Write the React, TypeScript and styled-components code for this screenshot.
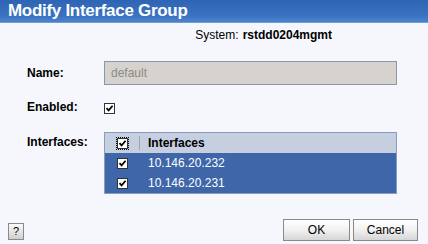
import React, { useState } from "react";
import styled, { createGlobalStyle } from "styled-components";

const GlobalStyle = createGlobalStyle`
    html, body {
        margin: 0;
        padding: 0;
        background: #f5f7fd;
    }
    body {
        font-family: "Liberation Sans", Arial, sans-serif;
        font-size: 12px;
        color: #000000;
    }
`;

const Dialog = styled.div`
    width: 428px;
    height: 244px;
    display: flex;
    flex-direction: column;
    background: #f5f7fd;
    overflow: hidden;
`;

const TitleBar = styled.div`
    height: 22px;
    display: flex;
    align-items: center;
    padding-left: 8px;
    background: linear-gradient(#2f64b4 0%, #3a72c2 70%, #4a82cc 100%);
    border-bottom: 1px solid #6f9ad6;
    color: #ffffff;
    font-weight: bold;
    font-size: 17px;
    letter-spacing: -0.3px;
`;

const SystemLine = styled.div`
    display: flex;
    justify-content: flex-end;
    padding: 5px 96px 0 0;
    height: 17px;
    font-size: 12px;
    b {
        margin-left: 4px;
    }
`;

const Form = styled.div`
    display: grid;
    grid-template-columns: 77px 293px;
    padding: 16px 0 0 27px;
`;

const Label = styled.div<{ height: number; top?: number }>`
    height: ${(p) => p.height}px;
    box-sizing: border-box;
    padding-top: ${(p) => p.top ?? 0}px;
    display: flex;
    align-items: ${(p) => (p.top ? "flex-start" : "center")};
    font-weight: bold;
    font-size: 12px;
`;

const TextInput = styled.div`
    height: 24px;
    box-sizing: border-box;
    border: 1px solid #8c96a6;
    background: #d6d3ce;
    color: #8d8a85;
    font-size: 12px;
    display: flex;
    align-items: center;
    padding-left: 6px;
`;

const Box = styled.span<{ dotted?: boolean }>`
    display: inline-flex;
    width: 11px;
    height: 11px;
    box-sizing: border-box;
    border: 1px solid #333333;
    background: #ffffff;
    align-items: center;
    justify-content: center;
    outline: ${(p) => (p.dotted ? "1px dotted #000000" : "none")};
`;

const CheckCell = styled.div<{ height: number; top: number }>`
    height: ${(p) => p.height}px;
    box-sizing: border-box;
    padding-top: ${(p) => p.top}px;
`;

const Table = styled.div`
    border: 1px solid #8a9bc0;
    display: flex;
    flex-direction: column;
`;

const Row = styled.div<{ header?: boolean }>`
    height: 20px;
    display: grid;
    grid-template-columns: 35px 1fr;
    align-items: center;
    background: ${(p) => (p.header ? "#c6cfdf" : "#3e66a9")};
    color: ${(p) => (p.header ? "#000000" : "#ffffff")};
    font-weight: ${(p) => (p.header ? "bold" : "normal")};
    font-size: 12px;
`;

const BoxCol = styled.div<{ divider?: boolean }>`
    display: flex;
    align-items: center;
    padding-left: 12px;
    border-right: ${(p) => (p.divider ? "1px solid #9aa5bb" : "none")};
    height: ${(p) => (p.divider ? "14px" : "100%")};
`;

const TextCol = styled.div`
    padding-left: 8px;
`;

const Footer = styled.div`
    margin-top: auto;
    display: flex;
    align-items: center;
    padding: 0 10px 3px 8px;
    height: 22px;
`;

const HelpButton = styled.div`
    width: 14px;
    height: 15px;
    border: 1px solid #8a8a8a;
    background: linear-gradient(#fafafa, #cfcfcf);
    display: flex;
    align-items: center;
    justify-content: center;
    font-size: 11px;
    margin-top: 2px;
`;

const Buttons = styled.div`
    margin-left: auto;
    display: flex;
    gap: 3px;
`;

const Button = styled.div<{ width: number }>`
    width: ${(p) => p.width}px;
    height: 22px;
    box-sizing: border-box;
    border: 1px solid #8a8a8a;
    background: linear-gradient(#ffffff 0%, #f1f1f1 50%, #d5d5d5 100%);
    display: flex;
    align-items: center;
    justify-content: center;
    font-size: 12px;
`;

const Check = () => (
    <svg width="9" height="9" viewBox="0 0 9 9">
        <path d="M1.5 4.2 L3.6 6.4 L7.6 1.8" fill="none" stroke="#000" strokeWidth="1.7" />
    </svg>
);

export default function App() {
    const [rows] = useState(["10.146.20.232", "10.146.20.231"]);

    return (
        <>
            <GlobalStyle />
            <Dialog>
                <TitleBar>Modify Interface Group</TitleBar>
                <SystemLine>
                    System:<b>rstdd0204mgmt</b>
                </SystemLine>
                <Form>
                    <Label height={24}>Name:</Label>
                    <TextInput>default</TextInput>
                    <Label height={47} top={15}>Enabled:</Label>
                    <CheckCell height={47} top={17}>
                        <Box>
                            <Check />
                        </Box>
                    </CheckCell>
                    <Label height={20}>Interfaces:</Label>
                    <Table>
                        <Row header>
                            <BoxCol divider>
                                <Box dotted>
                                    <Check />
                                </Box>
                            </BoxCol>
                            <TextCol>Interfaces</TextCol>
                        </Row>
                        {rows.map((r) => (
                            <Row key={r}>
                                <BoxCol>
                                    <Box>
                                        <Check />
                                    </Box>
                                </BoxCol>
                                <TextCol>{r}</TextCol>
                            </Row>
                        ))}
                    </Table>
                </Form>
                <Footer>
                    <HelpButton>?</HelpButton>
                    <Buttons>
                        <Button width={67}>OK</Button>
                        <Button width={65}>Cancel</Button>
                    </Buttons>
                </Footer>
            </Dialog>
        </>
    );
}
